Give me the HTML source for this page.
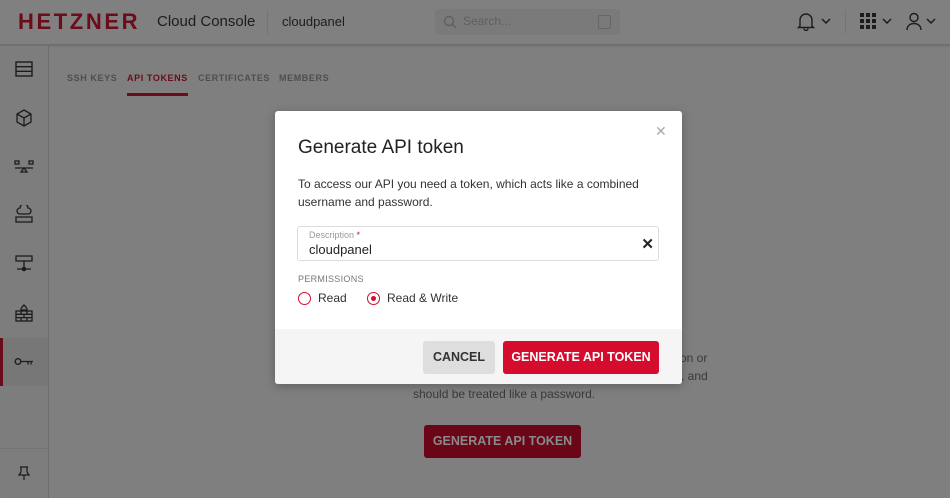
<!DOCTYPE html>
<html><head><meta charset="utf-8"><style>
*{box-sizing:border-box;margin:0;padding:0}
body{width:950px;height:498px;overflow:hidden;background:#7f7f7f;font-family:"Liberation Sans",sans-serif;position:relative}
.hdr{position:absolute;left:0;top:0;width:950px;height:45px;background:#808080;border-bottom:1px solid #6e6e6e;box-shadow:0 1px 2px rgba(0,0,0,.15)}
.logo{position:absolute;left:18px;top:9px;font-size:22px;font-weight:bold;color:#6b0c1a;letter-spacing:2.6px}
.cc{position:absolute;left:157px;top:13px;font-size:15px;color:#1c1c1c}
.sep{position:absolute;top:10px;width:1px;height:24px;background:#747474}
.proj{position:absolute;left:282px;top:14px;font-size:13px;color:#1c1c1c}
.search{position:absolute;left:435px;top:9px;width:185px;height:26px;background:#7a7a7a;border-radius:4px}
.search span{position:absolute;left:28px;top:5px;font-size:12px;color:#5f5f5f}
.side{position:absolute;left:0;top:46px;width:49px;height:452px;background:#7d7d7d;border-right:1px solid #6c6c6c;border-radius:0 0 0 6px}
.side .act{position:absolute;left:0;top:292px;width:48px;height:48px;background:#777}
.side .bar{position:absolute;left:0;top:292px;width:3px;height:48px;background:#6b0c1a}
.side svg{position:absolute}
.tabs{position:absolute;left:67px;top:73px;font-size:9px;font-weight:bold;letter-spacing:.6px;color:#4e4e4e}
.tabs span{position:absolute;white-space:nowrap}
.dlg{position:absolute;left:275px;top:111px;width:407px;height:273px;background:#fff;border-radius:3px;box-shadow:0 2px 10px rgba(0,0,0,.25);overflow:hidden}
.dlg h2{position:absolute;left:23px;top:26px;font-size:19px;font-weight:normal;color:#222}
.dlg .x{position:absolute;left:380px;top:12px;font-size:14px;color:#aaa}
.dlg p{position:absolute;left:23px;top:64px;width:360px;font-size:12px;line-height:18px;color:#333}
.inp{position:absolute;left:22px;top:115px;width:362px;height:35px;border:1px solid #ddd;border-radius:3px}
.inp .l{position:absolute;left:11px;top:3px;font-size:9px;color:#999}
.inp .v{position:absolute;left:11px;top:15px;font-size:13px;color:#222}
.inp .c{position:absolute;right:4px;top:8px;font-size:15px;font-weight:bold;color:#222}
.perm{position:absolute;left:23px;top:163px;font-size:9px;color:#777;letter-spacing:.3px}
.rad{position:absolute;top:181px;width:13px;height:13px;border:1.5px solid #d50c2d;border-radius:50%}
.rl{position:absolute;top:180px;font-size:12px;color:#333}
.foot{position:absolute;left:0;top:218px;width:407px;height:55px;background:#f5f5f5}
.btn{position:absolute;top:12px;height:33px;border-radius:3px;font-size:12.5px;font-weight:bold;line-height:33px;text-align:center}
.bg{color:#3a3a3a;font-size:12px;line-height:18px}
</style></head><body>
<div class="hdr">
 <div class="logo">HETZNER</div>
 <div class="cc">Cloud Console</div>
 <div class="sep" style="left:267px"></div>
 <div class="proj">cloudpanel</div>
 <div class="search"><svg width="14" height="14" style="position:absolute;left:8px;top:6px" viewBox="0 0 14 14"><circle cx="6" cy="6" r="4.5" fill="none" stroke="#5f5f5f" stroke-width="1.4"/><path d="M9.5 9.5L13 13" stroke="#5f5f5f" stroke-width="1.4"/></svg><span>Search...</span><div style="position:absolute;left:163px;top:6px;width:13px;height:14px;border:1px solid #666;border-radius:2px"></div></div>
 <svg width="20" height="20" style="position:absolute;left:796px;top:11px" viewBox="0 0 20 20"><path d="M4 15V9a6 6 0 0112 0v6l1.5 1.5h-15zM8 17.5a2 2 0 004 0" fill="none" stroke="#1c1c1c" stroke-width="1.4"/></svg>
 <svg width="10" height="6" style="position:absolute;left:821px;top:18px" viewBox="0 0 10 6"><path d="M1 1l4 4 4-4" fill="none" stroke="#1c1c1c" stroke-width="1.5"/></svg>
 <div class="sep" style="left:845px"></div>
 <svg width="16" height="16" style="position:absolute;left:860px;top:13px" viewBox="0 0 16 16" fill="#1c1c1c"><rect x="0" y="0" width="4" height="4"/><rect x="6" y="0" width="4" height="4"/><rect x="12" y="0" width="4" height="4"/><rect x="0" y="6" width="4" height="4"/><rect x="6" y="6" width="4" height="4"/><rect x="12" y="6" width="4" height="4"/><rect x="0" y="12" width="4" height="4"/><rect x="6" y="12" width="4" height="4"/><rect x="12" y="12" width="4" height="4"/></svg>
 <svg width="10" height="6" style="position:absolute;left:882px;top:18px" viewBox="0 0 10 6"><path d="M1 1l4 4 4-4" fill="none" stroke="#1c1c1c" stroke-width="1.5"/></svg>
 <svg width="18" height="18" style="position:absolute;left:905px;top:12px" viewBox="0 0 18 18"><circle cx="9" cy="5.5" r="4" fill="none" stroke="#1c1c1c" stroke-width="1.4"/><path d="M2 18c0-4 3-6.5 7-6.5s7 2.5 7 6.5" fill="none" stroke="#1c1c1c" stroke-width="1.4"/></svg>
 <svg width="10" height="6" style="position:absolute;left:926px;top:18px" viewBox="0 0 10 6"><path d="M1 1l4 4 4-4" fill="none" stroke="#1c1c1c" stroke-width="1.5"/></svg>
</div>
<div class="side">
 <div class="act"></div><div class="bar"></div>
 <svg width="18" height="16" style="left:15px;top:15px" viewBox="0 0 18 16" fill="none" stroke="#1c1c1c" stroke-width="1.4"><rect x="1" y="1" width="16" height="14"/><path d="M1 5.7h16M1 10.3h16"/></svg>
 <svg width="18" height="18" style="left:15px;top:63px" viewBox="0 0 18 18" fill="none" stroke="#1c1c1c" stroke-width="1.3"><path d="M9 1l7 4v8l-7 4-7-4V5zM2 5l7 4 7-4M9 9v8"/></svg>
 <svg width="20" height="14" style="left:14px;top:114px" viewBox="0 0 20 14" fill="none" stroke="#1c1c1c" stroke-width="1.3"><rect x="1" y="1" width="4" height="3"/><rect x="15" y="1" width="4" height="3"/><path d="M1 8h18M7 12l3-4 3 4z"/></svg>
 <svg width="18" height="18" style="left:15px;top:159px" viewBox="0 0 18 18" fill="none" stroke="#1c1c1c" stroke-width="1.3"><path d="M5 9a3 3 0 010-6 4 4 0 018 0 3 3 0 010 6z"/><rect x="1" y="12" width="16" height="5"/></svg>
 <svg width="18" height="18" style="left:15px;top:209px" viewBox="0 0 18 18" fill="none" stroke="#1c1c1c" stroke-width="1.3"><rect x="1" y="1" width="16" height="5"/><path d="M9 6v10M2 14h14"/><circle cx="9" cy="14" r="1.6" fill="#1c1c1c"/></svg>
 <svg width="18" height="18" style="left:15px;top:258px" viewBox="0 0 18 18" fill="none" stroke="#1c1c1c" stroke-width="1.3"><path d="M9 1c-2 2-3 3-3 5h6c0-2-1-3-3-5z"/><rect x="1" y="7" width="16" height="10"/><path d="M1 10.3h16M1 13.6h16M6 7v3.3M12 7v3.3M9 10.3v3.3M6 13.6V17M12 13.6V17"/></svg>
 <svg width="20" height="8" style="left:14px;top:312px" viewBox="0 0 20 8" fill="none" stroke="#1c1c1c" stroke-width="1.3"><circle cx="4" cy="3.5" r="2.8"/><path d="M7 3.5h12M14 3.5v3M17 3.5v3"/></svg>
 <div style="position:absolute;left:0;top:402px;width:48px;height:1px;background:#747474"></div>
 <svg width="12" height="14" style="left:18px;top:420px" viewBox="0 0 12 14" fill="none" stroke="#1c1c1c" stroke-width="1.2"><path d="M2 1h8M3 1v5L1 9h10L9 6V1M6 9v5"/></svg>
</div>
<div class="tabs">
 <span style="left:0;top:0">SSH KEYS</span>
 <span style="left:60px;top:0;color:#6b0c1a">API TOKENS</span>
 <span style="left:131px;top:0">CERTIFICATES</span>
 <span style="left:212px;top:0">MEMBERS</span>
 <div style="position:absolute;left:60px;top:20px;width:61px;height:3px;background:#6b0c1a"></div>
</div>
<div class="bg" style="position:absolute;left:680px;top:349px">on or</div>
<div class="bg" style="position:absolute;left:681px;top:367px">, and</div>
<div class="bg" style="position:absolute;left:413px;top:385px">should be treated like a password.</div>
<div style="position:absolute;left:424px;top:425px;width:157px;height:33px;background:#6a0617;border-radius:3px;color:#8a8a8a;font-size:12.5px;font-weight:bold;line-height:33px;text-align:center">GENERATE API TOKEN</div>
<div class="dlg">
 <h2>Generate API token</h2>
 <div class="x">✕</div>
 <p>To access our API you need a token, which acts like a combined username and password.</p>
 <div class="inp"><div class="l">Description <span style="color:#d50c2d">*</span></div><div class="v">cloudpanel</div><div class="c">✕</div></div>
 <div class="perm">PERMISSIONS</div>
 <div class="rad" style="left:23px"></div><div class="rl" style="left:43px">Read</div>
 <div class="rad" style="left:92px"><div style="position:absolute;left:2.5px;top:2.5px;width:5px;height:5px;border-radius:50%;background:#d50c2d"></div></div><div class="rl" style="left:112px">Read &amp; Write</div>
 <div class="foot">
  <div class="btn" style="left:148px;width:72px;background:#dedede;color:#333">CANCEL</div>
  <div class="btn" style="left:228px;width:156px;background:#d50c2d;color:#fff">GENERATE API TOKEN</div>
 </div>
</div>
</body></html>
